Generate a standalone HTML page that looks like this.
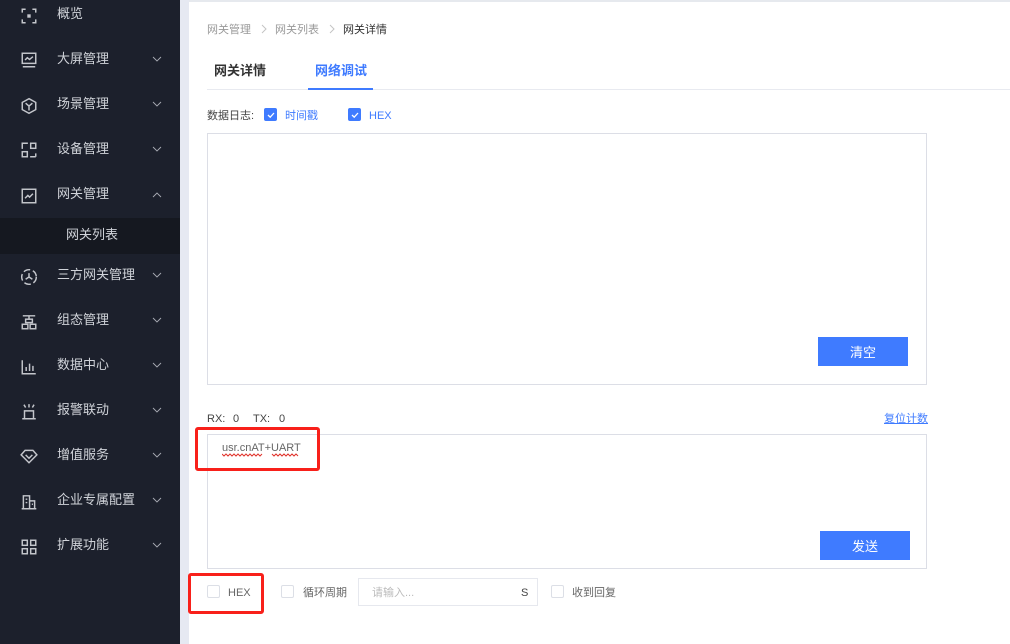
<!DOCTYPE html>
<html lang="zh-CN">
<head>
<meta charset="utf-8">
<title>网络调试</title>
<style>
html,body{margin:0;padding:0;width:1010px;height:644px;overflow:hidden;background:#fff}
body{position:relative;font-family:"Liberation Sans","Noto Sans CJK SC",sans-serif;font-size:11px;color:#333}
.a{position:absolute;white-space:nowrap}
.side{position:absolute;left:0;top:0;width:180px;height:644px;background:#1c202c}
.strip{position:absolute;left:180px;top:0;width:9px;height:644px;background:#e6e9f2}
.top{position:absolute;left:189px;top:0;width:821px;height:2px;background:#e6e9ee}
.sub{position:absolute;left:0;top:218px;width:180px;height:36px;background:#151820}
.m{position:absolute;left:57px;font-size:13px;line-height:18px;color:#d0d3d9;white-space:nowrap}
.i{position:absolute;left:20px;width:18px;height:18px;fill:none;stroke:#c4c6cc;stroke-width:1.3}
.c{position:absolute;left:151px;width:12px;height:8px;fill:none;stroke:#a8abb4;stroke-width:.9}
.t{line-height:18px;margin-top:1px}
.cb{position:absolute;width:13px;height:13px;box-sizing:border-box;border:1px solid #dcdfe6;border-radius:2px;background:#fff}
.cb.on{background:#3f7bff;border-color:#3f7bff}
.cb svg{position:absolute;left:1px;top:1px;width:10px;height:10px;fill:none;stroke:#fff;stroke-width:1.3}
.box{position:absolute;box-sizing:border-box;border:1px solid #dcdee6;background:#fff}
.btn{position:absolute;width:90px;height:29px;background:#3f7bff;color:#fff;font-size:13px;line-height:31px;text-align:center}
.red{position:absolute;box-sizing:border-box;border:3px solid #f8201a;border-radius:3px}
</style>
</head>
<body>
<div class="side"></div>
<div class="strip"></div>
<div class="top"></div>
<div class="sub"></div>

<svg class="i" style="top:7px" viewBox="0 0 16 16"><path d="M2 5V2h3M11 2h3v3M14 11v3h-3M5 14H2v-3"/><rect x="6.500" y="6.500" width="3" height="3" fill="#c4c6cc" stroke="none"/></svg>
<div class="m" style="top:5px">概览</div>

<svg class="i" style="top:51px" viewBox="0 0 16 16"><rect x="2" y="2" width="12" height="9"/><path d="M4.500 8l2-2 2 1.500 3-2.500M2.500 14h11"/></svg>
<div class="m" style="top:50px">大屏管理</div>
<svg class="c" style="top:55px" viewBox="0 0 12 8"><path d="M2 2l4 4 4-4"/></svg>

<svg class="i" style="top:97px" viewBox="0 0 16 16"><path d="M8 1.500l6 3.300v6.400l-6 3.300-6-3.300V4.800zM5 5.500l3 2.500 3-2.500M8 8v4"/></svg>
<div class="m" style="top:95px">场景管理</div>
<svg class="c" style="top:100px" viewBox="0 0 12 8"><path d="M2 2l4 4 4-4"/></svg>

<svg class="i" style="top:141px" viewBox="0 0 16 16"><path d="M2 7V2h5M14 14H9M14 14v-3"/><rect x="9.500" y="2" width="4.500" height="4.500"/><rect x="2" y="9.500" width="4.500" height="4.500"/></svg>
<div class="m" style="top:140px">设备管理</div>
<svg class="c" style="top:145px" viewBox="0 0 12 8"><path d="M2 2l4 4 4-4"/></svg>

<svg class="i" style="top:187px" viewBox="0 0 16 16"><rect x="2" y="2" width="12" height="12"/><path d="M4.500 10l2.500-2.500 1.500 1.500 3-3"/></svg>
<div class="m" style="top:185px">网关管理</div>
<svg class="c" style="top:191px" viewBox="0 0 12 8"><path d="M2 6l4-4 4 4"/></svg>

<div class="m" style="top:226px;left:66px">网关列表</div>

<svg class="i" style="top:268px" viewBox="0 0 16 16"><circle cx="8" cy="8" r="6.500" stroke-dasharray="6 2.500"/><path d="M8 4.500V8l3 2M8 8l-3 2"/></svg>
<div class="m" style="top:266px">三方网关管理</div>
<svg class="c" style="top:271px" viewBox="0 0 12 8"><path d="M2 2l4 4 4-4"/></svg>

<svg class="i" style="top:313px" viewBox="0 0 16 16"><path d="M2.500 2.500h11M8 2.500V6"/><rect x="5" y="5.500" width="6" height="3"/><rect x="2" y="10" width="5" height="4"/><rect x="9" y="10" width="5" height="4"/></svg>
<div class="m" style="top:311px">组态管理</div>
<svg class="c" style="top:316px" viewBox="0 0 12 8"><path d="M2 2l4 4 4-4"/></svg>

<svg class="i" style="top:358px" viewBox="0 0 16 16"><path d="M2 2v12h12M5.500 8v3.500M8.500 5v6.500M11.500 7v4.500"/></svg>
<div class="m" style="top:356px">数据中心</div>
<svg class="c" style="top:361px" viewBox="0 0 12 8"><path d="M2 2l4 4 4-4"/></svg>

<svg class="i" style="top:403px" viewBox="0 0 16 16"><path d="M4 14V7h8v7M2 14h12M3.500 1.500L5 4M8 1v3M12.500 1.500L11 4"/></svg>
<div class="m" style="top:401px">报警联动</div>
<svg class="c" style="top:406px" viewBox="0 0 12 8"><path d="M2 2l4 4 4-4"/></svg>

<svg class="i" style="top:447px" viewBox="0 0 16 16"><path d="M4.500 3h7L15 7l-7 7-7-7zM5 7l3 3 3-3"/></svg>
<div class="m" style="top:446px">增值服务</div>
<svg class="c" style="top:451px" viewBox="0 0 12 8"><path d="M2 2l4 4 4-4"/></svg>

<svg class="i" style="top:493px" viewBox="0 0 16 16"><path d="M1.500 14h13M3 14V2.500h5.500V14M8.500 7H13v7M5 5.500h1.500M5 8.500h1.500M10.500 10h1"/></svg>
<div class="m" style="top:491px">企业专属配置</div>
<svg class="c" style="top:496px" viewBox="0 0 12 8"><path d="M2 2l4 4 4-4"/></svg>

<svg class="i" style="top:538px" viewBox="0 0 16 16"><rect x="2" y="2" width="4.500" height="4.500"/><rect x="9.500" y="2" width="4.500" height="4.500"/><rect x="2" y="9.500" width="4.500" height="4.500"/><rect x="9.500" y="9.500" width="4.500" height="4.500"/></svg>
<div class="m" style="top:536px">扩展功能</div>
<svg class="c" style="top:541px" viewBox="0 0 12 8"><path d="M2 2l4 4 4-4"/></svg>

<!-- breadcrumb -->
<div class="a t" style="left:207px;top:20px;color:#999">网关管理</div>
<svg class="a" style="left:260px;top:24px;width:8px;height:10px;fill:none;stroke:#c4c4c4;stroke-width:1" viewBox="0 0 8 10"><path d="M2 1l4 4-4 4"/></svg>
<div class="a t" style="left:275px;top:20px;color:#999">网关列表</div>
<svg class="a" style="left:328px;top:24px;width:8px;height:10px;fill:none;stroke:#c4c4c4;stroke-width:1" viewBox="0 0 8 10"><path d="M2 1l4 4-4 4"/></svg>
<div class="a t" style="left:343px;top:20px;color:#333">网关详情</div>

<!-- tabs -->
<div class="a" style="left:207px;top:89px;width:803px;height:1px;background:#e8eaf0"></div>
<div class="a" style="left:214px;top:61px;font-size:13px;line-height:20px;font-weight:700;color:#333">网关详情</div>
<div class="a" style="left:315px;top:61px;font-size:13px;line-height:20px;font-weight:700;color:#3f7bff">网络调试</div>
<div class="a" style="left:308px;top:88px;width:65px;height:2px;background:#3f7bff"></div>

<!-- log header -->
<div class="a t" style="left:207px;top:106px;color:#444">数据日志:</div>
<div class="cb on" style="left:264px;top:108px"><svg viewBox="0 0 10 10"><path d="M2 5l2.200 2.200L8 3"/></svg></div>
<div class="a t" style="left:285px;top:106px;color:#3f7bff">时间戳</div>
<div class="cb on" style="left:348px;top:108px"><svg viewBox="0 0 10 10"><path d="M2 5l2.200 2.200L8 3"/></svg></div>
<div class="a t" style="left:369px;top:106px;color:#3f7bff">HEX</div>

<div class="box" style="left:207px;top:133px;width:720px;height:252px"></div>
<div class="btn" style="left:818px;top:337px">清空</div>

<div class="a t" style="left:207px;top:409px;color:#444">RX:</div>
<div class="a t" style="left:233px;top:409px;color:#444">0</div>
<div class="a t" style="left:253px;top:409px;color:#444">TX:</div>
<div class="a t" style="left:279px;top:409px;color:#444">0</div>
<div class="a t" style="left:884px;top:409px;color:#3f7bff;text-decoration:underline">复位计数</div>

<div class="box" style="left:207px;top:434px;width:720px;height:135px"></div>
<div class="a t" style="left:222px;top:438px;color:#666">usr.cnAT+UART</div>
<svg class="a" style="left:222px;top:453px;width:80px;height:4px;fill:none;stroke:#e0322a;stroke-width:1" viewBox="0 0 80 4"><path d="M0 1l2 2 2-2 2 2 2-2 2 2 2-2 2 2 2-2 2 2 2-2 2 2 2-2 2 2 2-2 2 2 2-2 2 2 2-2 2 2 2-2"/><path d="M50 1l2 2 2-2 2 2 2-2 2 2 2-2 2 2 2-2 2 2 2-2 2 2 2-2 2 2"/></svg>
<div class="btn" style="left:820px;top:531px">发送</div>

<!-- bottom row -->
<div class="cb" style="left:207px;top:585px"></div>
<div class="a t" style="left:228px;top:583px;color:#666">HEX</div>
<div class="cb" style="left:281px;top:585px"></div>
<div class="a t" style="left:303px;top:583px;color:#666">循环周期</div>
<div class="box" style="left:358px;top:578px;width:180px;height:28px;border-color:#e6e8ee"></div>
<div class="a t" style="left:372px;top:583px;color:#bbb">请输入...</div>
<div class="a t" style="left:521px;top:583px;color:#444">S</div>
<div class="cb" style="left:551px;top:585px"></div>
<div class="a t" style="left:572px;top:583px;color:#666">收到回复</div>

<div class="red" style="left:195px;top:427px;width:125px;height:44px"></div>
<div class="red" style="left:188px;top:573px;width:76px;height:41px"></div>
</body>
</html>
